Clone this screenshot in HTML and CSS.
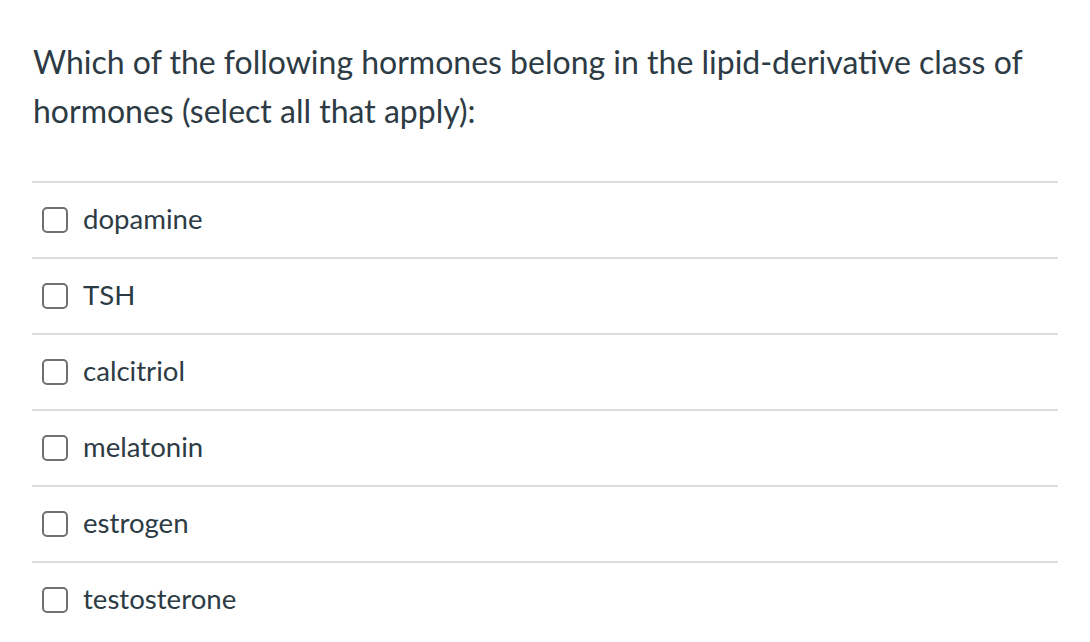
FILE: index.html
```html
<!DOCTYPE html>
<html>
<head>
<meta charset="utf-8">
<link rel="stylesheet" href="styles.css">
</head>
<body>
<div class="question">
  <div class="question-text">Which of the following hormones belong in the lipid-derivative class of hormones (select all that apply):</div>
  <div class="answers">
    <label class="answer"><span class="box"></span><span class="label">dopamine</span></label>
    <label class="answer"><span class="box"></span><span class="label">TSH</span></label>
    <label class="answer"><span class="box"></span><span class="label">calcitriol</span></label>
    <label class="answer"><span class="box"></span><span class="label">melatonin</span></label>
    <label class="answer"><span class="box"></span><span class="label">estrogen</span></label>
    <label class="answer"><span class="box"></span><span class="label">testosterone</span></label>
  </div>
</div>
</body>
</html>
```
FILE: styles.css
```css
html, body {
  margin: 0;
  padding: 0;
  background: #ffffff;
}
body {
  font-family: Lato, "Liberation Sans", sans-serif;
  color: #2d3b45;
}
.question {
  padding: 37px 32px 0 32px;
  width: 1026px;
}
.question-text {
  font-size: 32px;
  line-height: 49px;
  padding-left: 1px;
  margin-bottom: 46px;
}
.answers {
  display: flex;
  flex-direction: column;
}
.answer {
  display: flex;
  align-items: center;
  height: 74px;
  border-top: 2px solid #dcdcdc;
}
.box {
  width: 22px;
  height: 22px;
  border: 2px solid #707070;
  border-radius: 5px;
  margin-left: 10px;
  margin-right: 15px;
  flex: none;
}
.label {
  font-size: 27.6px;
  margin-top: -4px;
}
```
